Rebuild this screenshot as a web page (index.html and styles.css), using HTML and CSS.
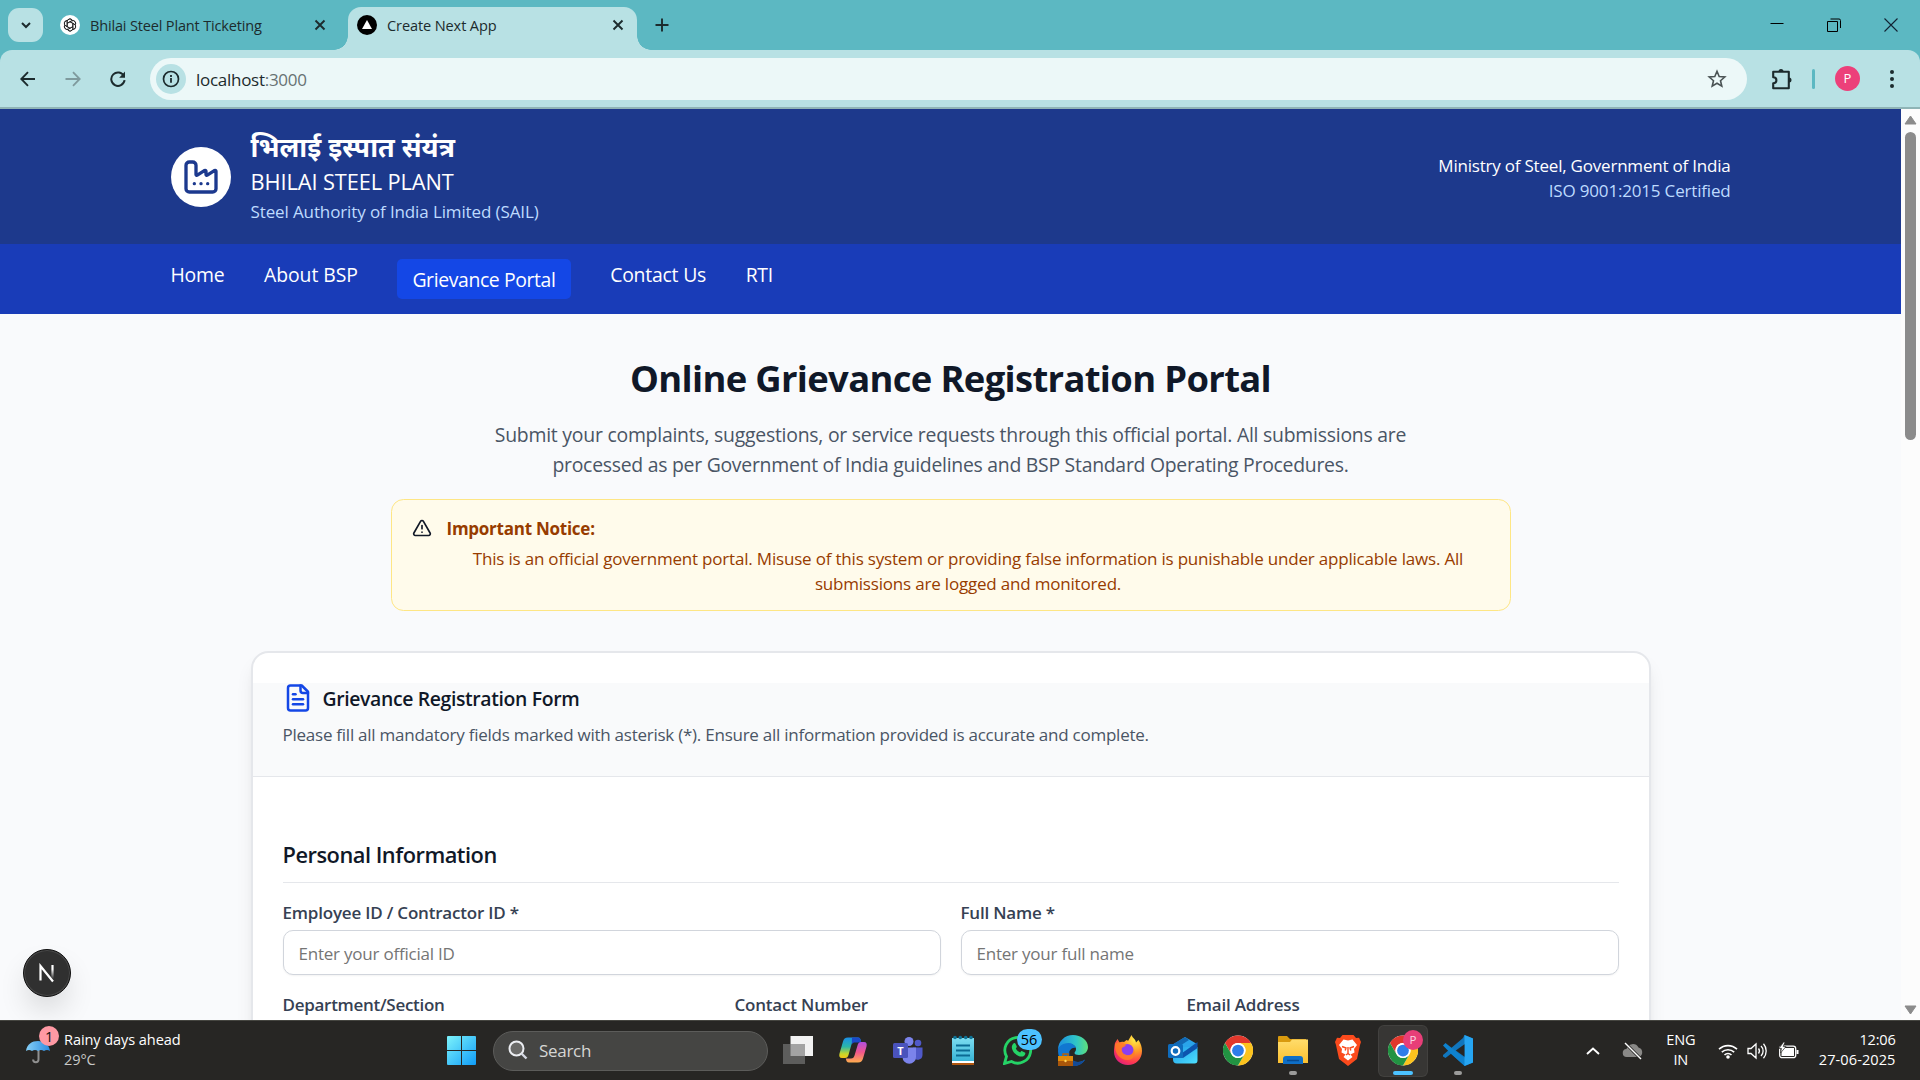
FILE: index.html
```html
<!DOCTYPE html>
<html lang="en">
<head>
<meta charset="utf-8">
<title>Create Next App</title>
<link rel="stylesheet" href="styles.css">
</head>
<body>
<svg width="0" height="0" class="defs" aria-hidden="true">
  <defs>
    <linearGradient id="win" x1="0" y1="0" x2="1" y2="1"><stop offset="0" stop-color="#7df3fb"/><stop offset="1" stop-color="#109cf8"/></linearGradient>
    <linearGradient id="copA" x1="0" y1="0" x2="0" y2="1"><stop offset="0" stop-color="#1b8fe8"/><stop offset=".45" stop-color="#2bb6a8"/><stop offset=".8" stop-color="#c9d72a"/><stop offset="1" stop-color="#f5c518"/></linearGradient>
    <linearGradient id="copB" x1="0" y1="0" x2="0" y2="1"><stop offset="0" stop-color="#b04fe0"/><stop offset=".5" stop-color="#f2568c"/><stop offset="1" stop-color="#ffae4e"/></linearGradient>
    <linearGradient id="edgeA" x1="0" y1="0" x2="1" y2="0"><stop offset="0" stop-color="#1c8fe0"/><stop offset=".6" stop-color="#2fc5c8"/><stop offset="1" stop-color="#5fe07a"/></linearGradient>
    <radialGradient id="fox" cx=".75" cy=".15" r="1"><stop offset="0" stop-color="#fff04a"/><stop offset=".4" stop-color="#ff9a25"/><stop offset=".75" stop-color="#ff3a50"/><stop offset="1" stop-color="#d81a88"/></radialGradient>
    <linearGradient id="note" x1="0" y1="0" x2="0" y2="1"><stop offset="0" stop-color="#7cdcf0"/><stop offset="1" stop-color="#38b4d6"/></linearGradient>
    <linearGradient id="fold" x1="0" y1="0" x2="0" y2="1"><stop offset="0" stop-color="#ffdc6b"/><stop offset="1" stop-color="#fcc02f"/></linearGradient>
    <linearGradient id="out" x1="0" y1="0" x2="1" y2="1"><stop offset="0" stop-color="#1e9be8"/><stop offset="1" stop-color="#4ee0ff"/></linearGradient>
    <linearGradient id="umb" x1="0" y1="0" x2="1" y2="0"><stop offset="0" stop-color="#86d0f8"/><stop offset="1" stop-color="#2a8ae0"/></linearGradient>
    <linearGradient id="nfade" x1="0" y1="0" x2="0" y2="1"><stop offset=".3" stop-color="#fff"/><stop offset="1" stop-color="#fff" stop-opacity="0"/></linearGradient>
    <symbol id="chrome" viewBox="0 0 48 48">
      <circle cx="24" cy="24" r="24" fill="#fff"/>
      <path d="M24 12H44.8A24 24 0 0 0 3.2 12L13.6 30A12 12 0 0 1 24 12Z" fill="#e2382c"/>
      <path d="M34.4 30L24 48A24 24 0 0 0 44.8 12H24A12 12 0 0 1 34.4 30Z" fill="#fcc31e"/>
      <path d="M13.6 30L3.2 12A24 24 0 0 0 24 48L34.4 30A12 12 0 0 1 13.6 30Z" fill="#229342"/>
      <circle cx="24" cy="24" r="12" fill="#fff"/><circle cx="24" cy="24" r="9.4" fill="#2f7de9"/>
    </symbol>
  </defs>
</svg>

<div class="tabstrip">
  <button class="tab-search"><svg width="12" height="12" viewBox="0 0 12 12"><path d="M2 4l4 4 4-4" fill="none" stroke="#1c2b2d" stroke-width="2"/></svg></button>
  <div class="tab tab-idle">
    <svg class="fav" width="20" height="20" viewBox="0 0 20 20"><circle cx="10" cy="10" r="10" fill="#fff"/><g fill="none" stroke="#222" stroke-width=".85"><path id="petal" d="M7.200 11.700V6.600a2.800 2.800 0 0 1 5.300-1.200M7.200 8.300l4.400-2.500a2.800 2.800 0 0 1 3.700 3.700"/><use href="#petal" transform="rotate(60 10 10)"/><use href="#petal" transform="rotate(120 10 10)"/><use href="#petal" transform="rotate(180 10 10)"/><use href="#petal" transform="rotate(240 10 10)"/><use href="#petal" transform="rotate(300 10 10)"/></g></svg>
    <span class="tab-title">Bhilai Steel Plant Ticketing</span>
    <svg class="x" width="12" height="12" viewBox="0 0 12 12"><path d="M1.500 1.500l9 9M10.500 1.500l-9 9" stroke="#1c2b2d" stroke-width="1.900"/></svg>
  </div>
  <div class="tab tab-active">
    <svg class="fav" width="20" height="20" viewBox="0 0 20 20"><circle cx="10" cy="10" r="10" fill="#000"/><path d="M10 5l5 9H5z" fill="#fff"/></svg>
    <span class="tab-title t2">Create Next App</span>
    <svg class="x" width="12" height="12" viewBox="0 0 12 12"><path d="M1.500 1.500l9 9M10.500 1.500l-9 9" stroke="#1c2b2d" stroke-width="1.900"/></svg>
  </div>
  <svg class="plus" width="14" height="14" viewBox="0 0 14 14"><path d="M7 .5v13M.5 7h13" stroke="#1c2b2d" stroke-width="1.900"/></svg>
  <div class="winctl">
    <svg width="14" height="14" viewBox="0 0 14 14"><path d="M.5 5.500h13" stroke="#000"/></svg>
    <svg width="14" height="14" viewBox="0 0 14 14"><path d="M.5 3.500h10v10H.500zM3.500 1h8.500a1.500 1.500 0 0 1 1.500 1.500V10" fill="none" stroke="#000"/></svg>
    <svg width="14" height="14" viewBox="0 0 14 14"><path d="M.5.5l13 13M13.500.5l-13 13" stroke="#123" stroke-width="1.100"/></svg>
  </div>
</div>

<div class="toolbar">
  <div class="toolbar-row">
    <svg class="ti" width="16" height="16" viewBox="0 0 16 16"><path d="M15 8H1.500M8 1.200L1.300 8 8 14.800" fill="none" stroke="#1c2b2d" stroke-width="1.900"/></svg>
    <svg class="ti" width="16" height="16" viewBox="0 0 16 16"><path d="M.5 8h14M8 1.200L14.700 8 8 14.800" fill="none" stroke="#7f9a9d" stroke-width="1.800"/></svg>
    <svg class="ti" width="16" height="16" viewBox="0 0 16 16"><path d="M14 5.200A6.700 6.700 0 1 0 14.600 9.200" fill="none" stroke="#1c2b2d" stroke-width="2"/><path d="M15 .6v6.200H9.200z" fill="#1c2b2d"/></svg>
    <div class="omnibox">
      <span class="info"><svg width="18" height="18" viewBox="0 0 18 18"><circle cx="9" cy="9" r="7.500" fill="none" stroke="#1c2b2d" stroke-width="1.700"/><path d="M9 8v4.700M9 5v1.900" stroke="#1c2b2d" stroke-width="1.800"/></svg></span>
      <span class="url">localhost<span class="port">:3000</span></span>
      <svg class="star" width="20" height="20" viewBox="0 0 20 20"><path d="M10 2.300l2.200 5.200 5.600.5-4.300 3.700 1.300 5.500-4.800-2.900-4.800 2.900 1.300-5.500L2.200 8l5.600-.5z" fill="none" stroke="#4a5354" stroke-width="1.600"/></svg>
    </div>
    <svg class="puzzle" width="22" height="22" viewBox="0 0 22 22"><path d="M2.200 3.800h15.600v16.500H2.200v-5.100c2.300 0 3.200-1.300 3.200-3s-.9-3-3.200-3z" fill="none" stroke="#1c2b2d" stroke-width="2.100" stroke-linejoin="round"/><path d="M7.500 3.500a2.500 2.500 0 0 1 5 0zM18 9.500a2.500 2.500 0 0 1 0 5z" fill="#1c2b2d"/></svg>
    <span class="sep"></span>
    <span class="avatar">P</span>
    <svg class="dots" width="6" height="20" viewBox="0 0 6 20"><g fill="#1c2b2d"><circle cx="3" cy="3" r="2"/><circle cx="3" cy="10" r="2"/><circle cx="3" cy="17" r="2"/></g></svg>
  </div>
</div>

<div class="viewport">
  <div class="page">
    <header class="site-header">
      <div class="wrap header-row">
        <div class="brand">
          <span class="logo"><svg width="40" height="40" viewBox="0 0 24 24" fill="none" stroke="#1c398e" stroke-width="2" stroke-linecap="round" stroke-linejoin="round"><path d="M12 16h.01"/><path d="M16 16h.01"/><path d="M3 19a2 2 0 0 0 2 2h14a2 2 0 0 0 2-2V8.500a.5.5 0 0 0-.769-.422l-4.462 2.844A.5.5 0 0 1 15 10.500v-2a.5.5 0 0 0-.769-.422L9.770 10.922A.5.5 0 0 1 9 10.500V5a2 2 0 0 0-2-2H5a2 2 0 0 0-2 2z"/><path d="M8 16h.01"/></svg></span>
          <div>
            <h1 class="hindi" lang="hi">भिलाई इस्पात संयंत्र</h1>
            <p class="plant">BHILAI STEEL PLANT</p>
            <p class="sail">Steel Authority of India Limited (SAIL)</p>
          </div>
        </div>
        <div class="ministry">
          <p>Ministry of Steel, Government of India</p>
          <p class="iso">ISO 9001:2015 Certified</p>
        </div>
      </div>
    </header>
    <nav class="site-nav">
      <div class="wrap nav-row">
        <a class="n1">Home</a><a class="n2">About BSP</a><a class="current">Grievance Portal</a><a class="n1">Contact Us</a><a class="n5">RTI</a>
      </div>
    </nav>
    <main>
      <h2 class="title">Online Grievance Registration Portal</h2>
      <p class="lead">Submit your complaints, suggestions, or service requests through this official portal. All submissions are<br><span class="lead2">processed as per Government of India guidelines and BSP Standard Operating Procedures.</span></p>
      <div class="notice">
        <svg width="20" height="20" viewBox="0 0 24 24" fill="none" stroke="#111827" stroke-width="2" stroke-linecap="round" stroke-linejoin="round"><path d="m21.730 18-8-14a2 2 0 0 0-3.480 0l-8 14A2 2 0 0 0 4 21h16a2 2 0 0 0 1.730-3"/><path d="M12 9v4"/><path d="M12 17h.01"/></svg>
        <div class="notice-body">
          <strong>Important Notice:</strong>
          <p>This is an official government portal. Misuse of this system or providing false information is punishable under applicable laws. All<br>submissions are logged and monitored.</p>
        </div>
      </div>
      <section class="card">
        <div class="card-head">
          <div class="card-title">
            <svg width="30" height="30" viewBox="0 0 24 24" fill="none" stroke="#1447e6" stroke-width="2" stroke-linecap="round" stroke-linejoin="round"><path d="M15 2H6a2 2 0 0 0-2 2v16a2 2 0 0 0 2 2h12a2 2 0 0 0 2-2V7Z"/><path d="M14 2v4a2 2 0 0 0 2 2h4"/><path d="M10 9H8"/><path d="M16 13H8"/><path d="M16 17H8"/></svg>
            <span>Grievance Registration Form</span>
          </div>
          <p class="card-desc">Please fill all mandatory fields marked with asterisk (*). Ensure all information provided is accurate and complete.</p>
        </div>
        <div class="card-body">
          <h3>Personal Information</h3>
          <div class="grid two">
            <label>Employee ID / Contractor ID *<input placeholder="Enter your official ID"></label>
            <label>Full Name *<input placeholder="Enter your full name"></label>
          </div>
          <div class="grid three">
            <label class="dep">Department/Section<input></label>
            <label>Contact Number<input></label>
            <label>Email Address<input></label>
          </div>
        </div>
      </section>
    </main>
  </div>
  <div class="scroll">
    <svg width="13" height="10" viewBox="0 0 13 10"><path d="M6.500 1L12 9H1z" fill="#8b8b8b" stroke="#8b8b8b" stroke-linejoin="round"/></svg>
    <span class="thumb"></span>
    <svg width="13" height="10" viewBox="0 0 13 10"><path d="M6.500 9L12 1H1z" fill="#8b8b8b" stroke="#8b8b8b" stroke-linejoin="round"/></svg>
  </div>
  <div class="next-badge"><svg width="18" height="20" viewBox="0 0 18 20"><path d="M2.500 17.500V3L15 18.500" fill="none" stroke="#fff" stroke-width="2.200"/><path d="M13.400 2h2.200v14h-2.200z" fill="url(#nfade)"/></svg></div>
</div>

<div class="taskbar">
  <div class="weather">
    <div class="umb">
      <svg width="26" height="26" viewBox="0 0 26 26"><path d="M13.500 10v11.500a2.700 2.700 0 0 1-5.400 0" fill="none" stroke="#8f8f8f" stroke-width="2"/><path d="M1 13C2 6 7 3 13 3s11 3 12 10c-2-1.500-4-1.500-6 0-2-1.500-4-1.500-6 0-2-1.500-4-1.500-6 0-2-1.500-4-1.500-6 0z" fill="url(#umb)"/></svg>
      <span class="count">1</span>
    </div>
    <div class="wtext"><div>Rainy days ahead</div><div class="deg">29°C</div></div>
  </div>
  <svg class="start" width="29" height="29" viewBox="0 0 29 29"><path d="M1 0h13v14H0V1a1 1 0 0 1 1-1zM15 0h13a1 1 0 0 1 1 1v13H15zM0 15h14v14H1a1 1 0 0 1-1-1zM15 15h14v13a1 1 0 0 1-1 1H15z" fill="url(#win)"/></svg>
  <div class="search"><svg width="20" height="20" viewBox="0 0 20 20"><circle cx="8.500" cy="8.500" r="7" fill="#6a6a68" stroke="#eceef2" stroke-width="2"/><path d="M13.500 13.500l5 5" stroke="#d5d8e2" stroke-width="2.400"/></svg><span>Search</span></div>
  <div class="apps">
    <div class="app"><svg width="30" height="30" viewBox="0 0 30 30"><path d="M7.500 1h22.500v20H7.500z" fill="#f2f2f2"/><path d="M0 9h22v20H0z" fill="#5d5d5c"/><path d="M7.500 9H22v12H7.500z" fill="#a3a3a3"/></svg></div>
    <div class="app"><svg width="30" height="30" viewBox="0 0 30 30"><path d="M10 2.500h10c2 0 2.500 1.500 3 4H17c-2 0-3 1-3.700 3.500L10.500 20c-.6 2-1.500 3-3.500 3H4c-2.500 0-3.200-2-2.500-4.500L5 6.500C5.800 4 7 2.500 10 2.500z" fill="url(#copA)"/><path d="M14 2.500h6c2 0 2.500 1.500 3.300 5H17c-1.500 0-2.500.5-3.200 2z" fill="#1a49c9"/><path d="M20 27.500H11c-2 0-2.700-1.500-3.200-4H13c2 0 3-1 3.700-3.500L19.500 10.500c.6-2 1.500-3.500 3.500-3.500h3c2.500 0 3.200 2 2.500 4.500L25 23.500c-.8 2.500-2 4-5 4z" fill="url(#copB)"/></svg></div>
    <div class="app"><svg width="30" height="30" viewBox="0 0 30 30"><circle cx="25" cy="8" r="3.300" fill="#5059c9"/><path d="M20 12.500h9.500V20a5 5 0 0 1-9.500 2z" fill="#5059c9"/><circle cx="16" cy="6.500" r="4.500" fill="#7b83eb"/><path d="M9.500 12.500H23V22a6.700 6.700 0 0 1-13.500 0z" fill="#7b83eb"/><rect x="0" y="8" width="15" height="15" rx="1.500" fill="#4a53bc"/><text x="7.500" y="19.500" text-anchor="middle" class="ico-t">T</text></svg></div>
    <div class="app"><svg width="24" height="32" viewBox="0 0 24 32"><path d="M1 26h22v5H1z" fill="#b0560f"/><path d="M1 25h22v4H1z" fill="#fff"/><path d="M1 4h22v23H1z" fill="url(#note)"/><path d="M5 11.500h14M5 16.500h14M5 21.500h14" stroke="#0b6a93" stroke-width="1.800"/><g fill="#0e7296"><circle cx="4" cy="3.500" r="1.800"/><circle cx="9.300" cy="3.500" r="1.800"/><circle cx="14.700" cy="3.500" r="1.800"/><circle cx="20" cy="3.500" r="1.800"/></g></svg></div>
    <div class="app"><svg width="30" height="30" viewBox="0 0 30 30"><path d="M1.500 28.500l2-7A12.900 12.900 0 1 1 8.500 26.500z" fill="none" stroke="#25d366" stroke-width="2.800"/><path d="M10.500 8.500c.6-.6 1.600-.5 2 .3l1.200 2.500c.2.600 0 1-.9 2.100.9 1.900 2.400 3.300 4.400 4.100 1-1.200 1.400-1.600 2-1.300l2.600 1.300c.6.300.6.700.5 1.300-.4 1.900-2 3-3.900 2.800-5-.6-9.300-4.700-9.600-9.300 0-1.500.7-2.800 1.700-3.800z" fill="#25d366"/></svg><span class="pill">56</span></div>
    <div class="app"><svg width="30" height="31" viewBox="0 0 30 31"><path d="M0 15C0 6 7 0 15 0s15 5 15 12c0 5-4 8-9 8-3 0-4.500-1-4.500-2 0-.9 1.500-1.500 1.500-4 0-3-3-5-7-5C6 9 1.500 11.500 0 15z" fill="url(#edgeA)"/><path d="M0 16c0-4 4-8 10.500-8C14 8 17 10 18 13c-2-1-5 0-6.500 3-2 5 2 11 8.500 11 3 0 5-1 7-2.500-2 4-6.500 6.500-12 6.500C7 31 0 25 0 16z" fill="#1177d1"/><path d="M11.500 16c-1.500 5 2.500 11 8.500 11 3 0 5-1 7-2.500-2 4-6 6.500-11 6.500h-2z" fill="#124a96"/><path d="M0 21h15v10H0z" fill="#e08a0b"/><path d="M0 26h15v5H0z" fill="#a9560a"/><path d="M5 21v-2h5v2" fill="none" stroke="#b4620a" stroke-width="1.500"/><circle cx="7.500" cy="26" r="1.200" fill="#ffd65c"/></svg></div>
    <div class="app"><svg width="30" height="31" viewBox="0 0 30 31"><path d="M2 8l2.500-4 2 3.500c1.500-1 3-1 4.500-.5L13.500 5c1 0 1.500 1 1.500 1L18.500 0c1.500 3.500 4 4 4.500 7.500L25.500 5C28 9 29 12 29 16c0 8-6 14-14 14S1 24 1 17c0-4 .5-6 1-9z" fill="url(#fox)"/><circle cx="14.500" cy="15" r="6" fill="#8a3ff0"/><path d="M2 9c4-2 7-2 11 1-1 2-3 2.500-4.500 3 0 5 3 7 6.500 7 4 0 6-2.500 6-5 2 5-1 10-6.500 10C7 25 1 18 2 9z" fill="#ff7d26" opacity=".85"/></svg></div>
    <div class="app"><svg width="30" height="30" viewBox="0 0 30 30"><path d="M4 10L17 2l12 7v4H5z" fill="#2aa4ea"/><path d="M17 2L5.500 9v6L21 5z" fill="#1268b4"/><path d="M5 12h24.500v13.500a3 3 0 0 1-3 3H9a4 4 0 0 1-4-4z" fill="url(#out)"/><path d="M10 21L29.500 7v6L15 23z" fill="#0c54ae"/><rect x="0" y="9" width="15" height="14" rx="1.500" fill="#0f6cbd"/><circle cx="7.500" cy="16" r="3.800" fill="none" stroke="#fff" stroke-width="2.200"/></svg></div>
    <div class="app"><svg width="30" height="31"><use href="#chrome"/></svg></div>
    <div class="app"><svg width="30" height="28" viewBox="0 0 30 28"><path d="M0 1a1 1 0 0 1 1-1h8l3 3h16v6H0z" fill="#d99a0e"/><path d="M0 6h12l2-2.500h16V27H0z" fill="url(#fold)"/><path d="M5 28v-5a3 3 0 0 1 3-3h14a3 3 0 0 1 3 3v5z" fill="#0f6fc6"/><path d="M9 24.500h12" stroke="#074a90" stroke-width="1.500"/></svg><i class="run"></i></div>
    <div class="app"><svg width="26" height="31" viewBox="0 0 26 31"><path d="M7.500 0h11L21 3l3-.3L26 7l-1 3-3 14-9 7-9-7L1 10 0 7l2-4.300L5 3z" fill="#fb4a1c"/><path d="M8.500 4.500L13 5.500l4.500-1L22 10l-3 4 .5 3.500-4 2 2 2.500-4.500 3.500L8.500 22l2-2.500-4-2L7 14l-3-4z" fill="#fff"/><path d="M7 11.500l4 1.500-.8 2.500M19 11.500L15 13l.8 2.500M13 12v6.500l-2 1.500M13 18.500l2 1.500" fill="none" stroke="#fb4a1c" stroke-width="1.400"/></svg></div>
    <div class="app active"><svg width="30" height="31"><use href="#chrome"/></svg><span class="prof">P</span><i class="run on"></i></div>
    <div class="app"><svg width="30" height="31" viewBox="0 0 30 31"><path d="M21.500 0L30 3.500v24L21.500 31 8 18.800 2.500 23 0 21.500V20L20 3z" fill="#1176bd"/><path d="M0 10.500L2.500 8 22 23.500V31L8 18.800z" fill="#0e82cf"/><path d="M21.500 0L30 3.500v24L21.500 31z" fill="#26a5f2"/><path d="M21.500 9.300V21.700L12.800 15.500z" fill="#272624"/></svg><i class="run"></i></div>
  </div>
  <div class="tray">
    <svg class="chev" width="14" height="8" viewBox="0 0 14 8"><path d="M1 7l6-5.500L13 7" fill="none" stroke="#fff" stroke-width="1.900"/></svg>
    <svg class="cloud" width="22" height="18" viewBox="0 0 22 18"><path d="M5 15a4 4 0 0 1-.5-8 6.500 6.500 0 0 1 12-1.500A5 5 0 0 1 17 15z" fill="#8a8987"/><path d="M3 1l16 16" stroke="#272624" stroke-width="3"/><path d="M3 1l16 16" stroke="#fff" stroke-width="1.400"/></svg>
    <div class="lang"><div>ENG</div><div>IN</div></div>
    <svg class="wifi" width="20" height="16" viewBox="0 0 20 16"><g fill="none" stroke="#fff" stroke-width="1.600"><path d="M1 6.200a13 13 0 0 1 18 0M3.800 9.200a9 9 0 0 1 12.400 0M6.500 12a5 5 0 0 1 7 0"/></g><circle cx="10" cy="14" r="1.800" fill="#fff"/></svg>
    <svg class="vol" width="21" height="18" viewBox="0 0 21 18"><g fill="none" stroke="#fff" stroke-width="1.300"><path d="M1 6.500h3L9 2v14l-5-4.500H1zM11.500 6.500a4 4 0 0 1 0 5M14 4a7 7 0 0 1 0 10M16.500 1.800a11 11 0 0 1 0 14.400"/></g></svg>
    <svg class="bat" width="21" height="17" viewBox="0 0 21 17"><rect x="1.700" y="4.200" width="16" height="11.500" rx="2.500" fill="none" stroke="#fff" stroke-width="1.300"/><path d="M3.500 6h12.500v8H3.500z" fill="#fff"/><path d="M18.500 8h2v4h-2z" fill="#fff"/><path d="M5.500 0L1 6.500h2.500L2.500 11 8 4.500H5.200L7 0z" fill="#fff" stroke="#272624" stroke-width=".7"/></svg>
    <div class="clock"><div class="time">12:06</div><div>27-06-2025</div></div>
  </div>
</div>
</body>
</html>
```
FILE: styles.css
```css
*{box-sizing:border-box}
body{margin:0;width:1920px;height:1080px;overflow:hidden;display:flex;flex-direction:column;background:#f9fafc;font-family:"Open Sans","Noto Sans",sans-serif;color:#101828}
h1,h2,h3,p{margin:0}
svg{display:block;flex:none}
.defs{position:absolute}

/* browser chrome */
.tabstrip{height:50px;flex:none;background:#5cb8c2;display:flex;align-items:center;padding-left:8px}
.tab-search{width:35px;height:34px;border:0;border-radius:11px;background:#b8e1e4;padding:0;display:flex;align-items:center;justify-content:center}
.tab{display:flex;align-items:center;font-size:14.55px;letter-spacing:-.175px;color:#1c2b2d}
.tab-idle{width:305px;padding-left:17px}
.tab-title{margin-left:10px;line-height:20px;white-space:nowrap}
.t2{letter-spacing:-.11px}
.tab .x{margin-left:auto}
.tab-idle .x{margin-right:22px}
.tab-active{position:relative;width:289px;height:43px;margin-top:7px;padding:0 13px 7px 9px;background:#b8e1e4;border-radius:13px 13px 0 0}
.tab-active::before,.tab-active::after{content:"";position:absolute;bottom:0;width:14px;height:14px}
.tab-active::before{left:-14px;background:radial-gradient(circle at 0 0,transparent 13.500px,#b8e1e4 14px)}
.tab-active::after{right:-14px;background:radial-gradient(circle at 100% 0,transparent 13.500px,#b8e1e4 14px)}
.plus{margin-left:18px}
.winctl{margin-left:auto;display:flex;gap:43px;padding-right:22px}
.toolbar{height:59px;flex:none;background:#5cb8c2}
.toolbar-row{height:59px;background:#b8e1e4;border-bottom:2px solid #8fb4b6;border-radius:12px 12px 0 0;display:flex;align-items:center;padding-left:19.500px}
.ti{margin-right:29px}
.omnibox{width:1597px;height:42px;margin-left:-4.500px;border-radius:21px;background:#ecf8f8;display:flex;align-items:center;padding:0 20px 0 6px}
.info{width:30px;height:30px;border-radius:50%;background:#b8e1e4;display:flex;align-items:center;justify-content:center}
.url{margin-left:10px;padding-top:1px;font-size:17px;letter-spacing:-.28px;color:#1c2b2d}
.port{color:#677273}
.star{margin-left:auto}
.puzzle{margin-left:24px}
.sep{width:3px;height:20px;border-radius:2px;background:#5cb8c2;margin-left:19px}
.avatar{width:25px;height:25px;border-radius:50%;background:#ec407a;color:#fff;font-size:13px;line-height:25px;text-align:center;margin-left:20px}
.dots{margin-left:29px}

/* page */
.viewport{position:relative;height:911px;flex:none;display:flex;overflow:hidden}
.page{width:1901px;overflow:hidden}
.wrap{width:1560px;margin:0 auto;display:flex}
.site-header{height:135px;background:#1d398c;color:#fff}
.header-row{height:135px;align-items:center;justify-content:space-between}
.brand{display:flex;align-items:center;gap:20px}
.logo{width:60px;height:60px;border-radius:50%;background:#fff;display:flex;align-items:center;justify-content:center}
.hindi{font-size:26.9px;font-weight:700;line-height:35px;white-space:nowrap}
.plant{font-size:21.800px;line-height:35px;letter-spacing:-.1px}
.sail{font-size:17px;line-height:26px;letter-spacing:-.12px;color:#bedbff}
.ministry{padding-top:2px;text-align:right;font-size:17px;line-height:25px;letter-spacing:-.21px}
.iso{color:#bedbff;letter-spacing:-.18px}
.site-nav{height:70px;background:#193cb8;color:#fff}
.nav-row{padding-top:15px;gap:39.600px;align-items:flex-start;font-size:19.400px;line-height:32px}
.n1{letter-spacing:-.21px}
.n2{letter-spacing:-.08px}
.n5{letter-spacing:-.35px}
.current{background:#1447e6;border-radius:5px;padding:5px 15px 3px;letter-spacing:-.38px}
main{padding-top:40px;display:flex;flex-direction:column;align-items:center}
.title{font-size:36.400px;line-height:49px;letter-spacing:-.66px;font-weight:700;text-align:center}
.lead{margin-top:17px;font-size:19.400px;line-height:30px;letter-spacing:-.235px;color:#4a5565;text-align:center;white-space:nowrap}
.lead2{letter-spacing:-.264px}
.notice{margin-top:19px;width:1120px;height:112px;border:1px solid #fee685;border-radius:12.500px;background:#fffbeb;display:flex;gap:14px;padding:16px 19px 14px 20px;color:#973c00;font-size:17px;line-height:25px}
.notice svg{margin-top:2px}
.notice-body{flex:1}
.notice strong{display:block;margin-left:1px;letter-spacing:-.25px}
.notice p{margin-top:5px;letter-spacing:-.192px;text-align:center;white-space:nowrap}
.card{margin-top:40px;width:1400px;border:2px solid #e5e7eb;border-radius:17.500px;background:#fff;padding-top:30px;box-shadow:0 12px 19px -4px rgba(0,0,0,.1),0 5px 8px -5px rgba(0,0,0,.1)}
.card-head{height:94px;padding:0 30px;background:#f9fafb;border-bottom:1px solid #e5e7eb}
.card-title{height:30px;display:flex;align-items:center;gap:10px;font-size:19.400px;font-weight:600;letter-spacing:-.36px}
.card-desc{margin-top:9px;font-size:17px;line-height:26px;letter-spacing:-.247px;color:#4a5565;white-space:nowrap}
.card-body{padding:58px 30px 30px}
h3{height:48px;border-bottom:1px solid #e5e7eb;font-size:21.800px;line-height:39px;font-weight:600;letter-spacing:-.48px}
.grid{display:grid;gap:20px;margin-top:20px}
.two{grid-template-columns:1fr 1fr}
.three{grid-template-columns:1fr 1fr 1fr}
label{display:block;font-size:17px;line-height:19px;font-weight:600;letter-spacing:-.2px;color:#364153}
.dep{letter-spacing:-.28px}
input{display:block;width:100%;height:45px;margin-top:8px;border:1px solid #d1d5dc;border-radius:10px;padding:1px 15px 0;background:#fff;font:400 17px "Open Sans","Noto Sans",sans-serif;letter-spacing:-.22px;box-shadow:0 1px 2px rgba(0,0,0,.05)}
input::placeholder{color:#757575}
.scroll{width:19px;background:#fcfcfc;display:flex;flex-direction:column;align-items:center;padding:6px 0 5px}
.thumb{width:11px;height:308px;border-radius:6px;background:#8b8b8b;margin:7px 0 auto}
.next-badge{position:absolute;left:23px;top:840px;width:48px;height:48px;border-radius:50%;background:#303030;border:1.500px solid #111;box-shadow:inset 0 0 0 1px #4a4a4a,0 16px 32px -8px rgba(0,0,0,.24);display:flex;align-items:center;justify-content:center}

/* taskbar */
.taskbar{height:60px;flex:none;display:flex;align-items:center;background:#272624;border-top:1px solid #454540;color:#fff;font-size:14.550px}
.weather{width:447px;display:flex;align-items:center;padding-left:25px;line-height:20px;letter-spacing:-.08px}
.wtext,.lang,.clock{padding-bottom:3px}
.umb{position:relative;width:39px}
.count{position:absolute;left:14px;top:-12px;width:20px;height:20px;border-radius:50%;background:#ff99a4;color:#111;text-align:center}
.deg{color:#c9c9c8}
.search{width:275px;height:40px;margin-left:17px;border-radius:20px;background:#454543;border:1px solid #5c5c5a;display:flex;align-items:center;gap:11px;padding:0 0 1px 14px;font-size:17px;letter-spacing:-.3px;color:#d6d6d4}
.start,.apps .app>svg{margin-bottom:1px}
.apps{display:flex;margin-left:2.500px}
.app{position:relative;width:55px;height:50px;display:flex;align-items:center;justify-content:center}
.app.active{width:48px;margin:0 3.500px;background:#373634;border-radius:5px;box-shadow:0 0 0 1px #42413f}
.run{position:absolute;bottom:1px;width:8px;height:4px;border-radius:2px;background:#9b9b9a}
.run.on{width:20px;background:#4cc2ff}
.pill{position:absolute;left:26px;top:3px;width:25px;height:21px;border-radius:11px;background:#4cc2ff;color:#000;text-align:center;line-height:20px}
.prof{position:absolute;left:24px;top:4px;width:20px;height:20px;border-radius:50%;background:#e83e78;color:#fbd5e2;font-size:11.500px;line-height:20px;text-align:center}
.ico-t{font:700 11px "Open Sans",sans-serif;fill:#fff}
.tray{margin-left:auto;display:flex;align-items:center;padding-right:24.500px;line-height:20px}
.cloud{margin-left:22px}
.lang{width:30px;margin-left:22px;text-align:center;letter-spacing:-.2px}
.wifi{margin-left:22px}
.vol{margin-left:9.500px}
.bat{margin-left:9.500px}
.clock{margin-left:20px;text-align:right;letter-spacing:.08px}
.time{letter-spacing:-.2px}
```
